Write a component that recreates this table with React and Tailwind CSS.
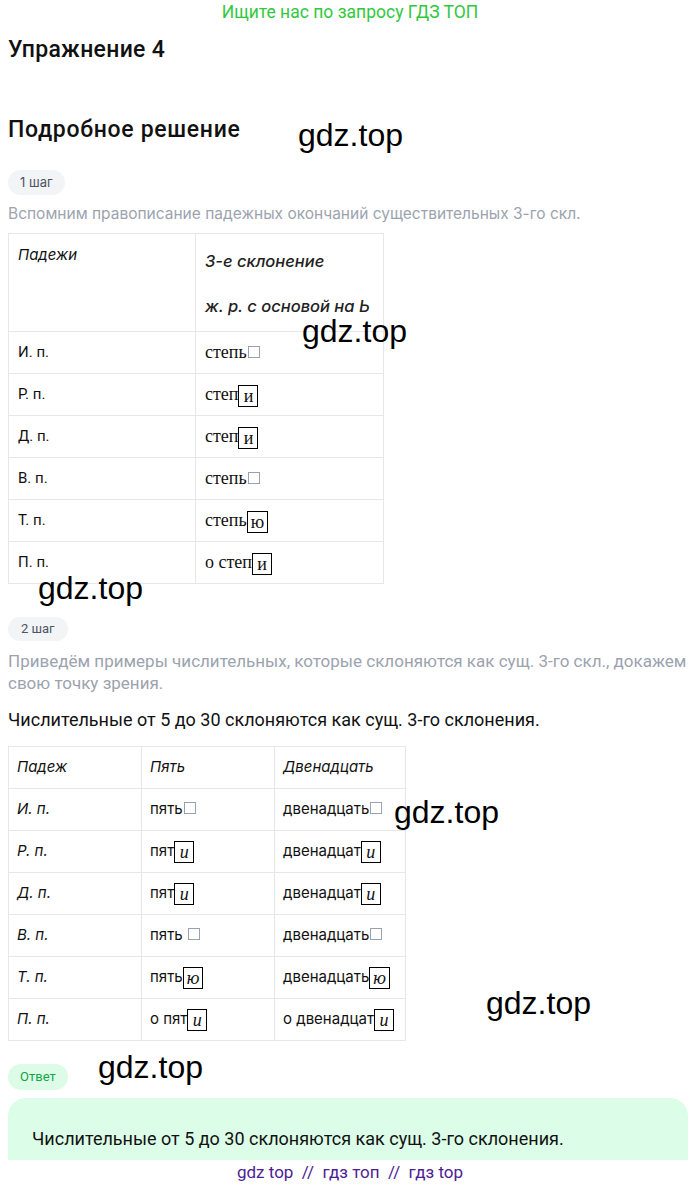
import React from 'react';

const Box = ({ ch, italic }) => (
  <span
    className={`inline-flex items-center justify-center border border-black h-[22px] min-w-[20px] px-[3px] align-middle leading-none text-[18px] ${
      italic ? 'italic' : ''
    }`}
    style={{ fontFamily: '"Liberation Serif", "Times New Roman", serif' }}
  >
    {ch}
  </span>
);

const Empty = () => (
  <span className="inline-block w-[12px] h-[12px] border border-gray-400 align-baseline ml-[1px]" />
);

const Mark = ({ className }) => (
  <div
    className={`absolute text-[32px] leading-none text-black pointer-events-none ${className}`}
    style={{ fontFamily: '"Liberation Sans", Arial, sans-serif' }}
  >
    gdz.top
  </div>
);

const table1 = [
  ['И. п.', <>степь<Empty /></>],
  ['Р. п.', <>степ<Box ch="и" /></>],
  ['Д. п.', <>степ<Box ch="и" /></>],
  ['В. п.', <>степь<Empty /></>],
  ['Т. п.', <>степь<Box ch="ю" /></>],
  ['П. п.', <>о степ<Box ch="и" /></>],
];

const table2 = [
  ['И. п.', <>пять<Empty /></>, <>двенадцать<Empty /></>],
  ['Р. п.', <>пят<Box ch="и" italic /></>, <>двенадцат<Box ch="и" italic /></>],
  ['Д. п.', <>пят<Box ch="и" italic /></>, <>двенадцат<Box ch="и" italic /></>],
  ['В. п.', <>пять <Empty /></>, <>двенадцать<Empty /></>],
  ['Т. п.', <>пять<Box ch="ю" italic /></>, <>двенадцать<Box ch="ю" italic /></>],
  ['П. п.', <>о пят<Box ch="и" italic /></>, <>о двенадцат<Box ch="и" italic /></>],
];

const serif = { fontFamily: '"Liberation Serif", "Times New Roman", serif' };
const inter = { fontFamily: 'Inter, "Noto Sans", sans-serif' };

export default function App() {
  return (
    <div
      className="relative min-h-[1187px] bg-white px-2 text-[#111]"
      style={{ fontFamily: 'Roboto, "Liberation Sans", sans-serif' }}
    >
      <div className="text-center text-[17.5px] leading-[24px] text-[#30c83c]">Ищите нас по запросу ГДЗ ТОП</div>

      <h1 className="mt-[12px] text-[23px] leading-[28px] font-medium tracking-[0.3px]">Упражнение 4</h1>

      <h2 className="mt-[52px] text-[23px] leading-[28px] font-medium tracking-[0.7px]">Подробное решение</h2>

      <div className="mt-[26px] inline-flex h-[25px] items-center rounded-full bg-gray-100 px-[12px] text-[13px] text-gray-600" style={inter}>
        1 шаг
      </div>

      <p className="mt-[8px] text-[15.5px] leading-[22px] text-[#9ca3af]" style={inter}>
        Вспомним правописание падежных окончаний существительных 3-го скл.
      </p>

      <table className="mt-[8px] table-fixed w-[375px] border-collapse text-[15px]">
        <tbody>
          <tr className="h-[98px]">
            <td className="w-[187px] border border-gray-200 px-[9px] pt-[10px] align-top italic" style={inter}>
              Падежи
            </td>
            <td className="w-[188px] border border-gray-200 px-[9px] align-top italic font-medium text-[16.5px] whitespace-nowrap text-[#222]" style={inter}>
              <p className="mt-[15px] leading-[24px]">3-е склонение</p>
              <p className="mt-[21px] leading-[24px]">ж. р. с основой на Ь</p>
            </td>
          </tr>
          {table1.map(([c, v], i) => (
            <tr key={i} className="h-[42px]">
              <td className="border border-gray-200 px-[9px] text-[15px]">{c}</td>
              <td className="border border-gray-200 px-[9px] text-[18px] whitespace-nowrap" style={serif}>
                {v}
              </td>
            </tr>
          ))}
        </tbody>
      </table>

      <div className="mt-[33px] inline-flex h-[24px] items-center rounded-full bg-gray-100 px-[13px] text-[13px] text-gray-600">
        2 шаг
      </div>

      <p className="mt-[9px] text-[17px] leading-[22px] text-[#9ca3af]">
        Приведём примеры числительных, которые склоняются как сущ. 3-го скл., докажем свою точку зрения.
      </p>

      <p className="mt-[15px] text-[18px] leading-[22px]">Числительные от 5 до 30 склоняются как сущ. 3-го склонения.</p>

      <table className="mt-[15px] table-fixed w-[397px] border-collapse text-[15px]" style={inter}>
        <tbody>
          <tr className="h-[42px] italic">
            <td className="w-[133px] border border-gray-200 px-[8px]">Падеж</td>
            <td className="w-[133px] border border-gray-200 px-[8px]">Пять</td>
            <td className="w-[131px] border border-gray-200 px-[8px]">Двенадцать</td>
          </tr>
          {table2.map(([c, a, b], i) => (
            <tr key={i} className="h-[42px]">
              <td className="border border-gray-200 px-[8px] italic">{c}</td>
              <td className="border border-gray-200 px-[8px] whitespace-nowrap">{a}</td>
              <td className="border border-gray-200 px-[8px] whitespace-nowrap">{b}</td>
            </tr>
          ))}
        </tbody>
      </table>

      <div className="mt-[23px] inline-flex h-[26px] items-center rounded-full bg-[#dcfce7] px-[12px] text-[13px] text-[#16a34a]">
        Ответ
      </div>

      <div className="mt-[8px] mr-[4px] rounded-t-[18px] bg-[#dcfde8] px-[24px] pt-[30px] pb-[40px]">
        <p className="text-[18px] leading-[22px]">Числительные от 5 до 30 склоняются как сущ. 3-го склонения.</p>
      </div>

      <div className="fixed inset-x-0 bottom-0 h-[27px] bg-white text-center text-[17px] leading-[24px] text-[#4c1d95]">
        gdz top&nbsp; //&nbsp; гдз топ&nbsp; //&nbsp; гдз top
      </div>

      <Mark className="left-[298px] top-[119px]" />
      <Mark className="left-[302px] top-[315px]" />
      <Mark className="left-[38px] top-[572px]" />
      <Mark className="left-[394px] top-[796px]" />
      <Mark className="left-[486px] top-[987px]" />
      <Mark className="left-[98px] top-[1051px]" />
    </div>
  );
}
